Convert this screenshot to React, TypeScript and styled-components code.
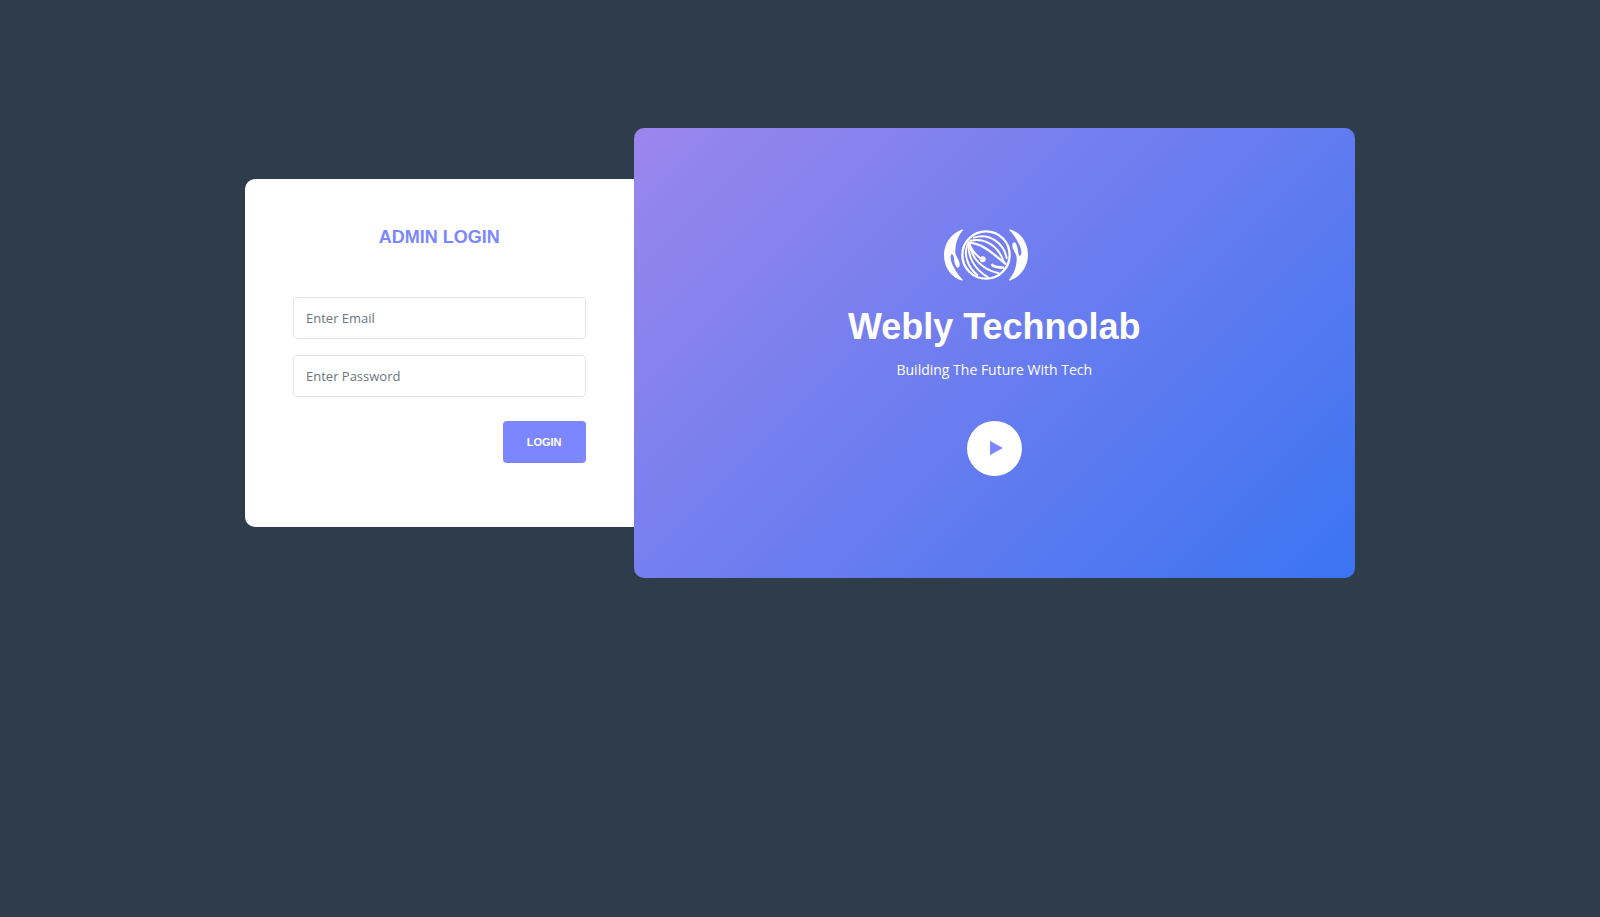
import React from "react";
import styled, { createGlobalStyle } from "styled-components";

const GlobalStyle = createGlobalStyle`
  *, *::before, *::after { box-sizing: border-box; }
  body {
    margin: 0;
    background: #2f3c4b;
    font-family: "Open Sans", sans-serif;
    font-size: 14px;
  }
`;

const Page = styled.main`
  padding: 128px 16px 64px;
`;

const Container = styled.div`
  display: grid;
  grid-template-columns: 35fr 65fr;
  align-items: center;
  width: 100%;
  max-width: 1110px;
  margin: 0 auto;
`;

const LoginCard = styled.form`
  display: flex;
  flex-direction: column;
  padding: 48px 48px 64px;
  background: #fff;
  border-radius: 10px 0 0 10px;
`;

const LoginHeading = styled.h1`
  margin: 0 0 50px;
  color: #7b86ff;
  font: bold 18px/20px "Liberation Sans", Arial, sans-serif;
  text-align: center;
  text-transform: uppercase;
`;

const Field = styled.input`
  width: 100%;
  height: 42px;
  margin-bottom: 16px;
  padding: 0 12px;
  border: 1px solid #e2e5e8;
  border-radius: 4px;
  background: #fff;
  color: #495057;
  font: 13px/20px "Open Sans", sans-serif;

  &::placeholder {
    color: #6c757d;
    opacity: 1;
  }
`;

const LoginButton = styled.button`
  align-self: flex-end;
  height: 42px;
  margin-top: 8px;
  padding: 0 24px;
  border: 0;
  border-radius: 4px;
  background: #7b86ff;
  color: #fff;
  font: bold 11px/16px "Liberation Sans", Arial, sans-serif;
  text-transform: uppercase;
  cursor: pointer;
`;

const BrandPanel = styled.section`
  display: flex;
  flex-direction: column;
  align-items: center;
  justify-content: center;
  min-height: 450px;
  padding-bottom: 2px;
  border-radius: 10px;
  background: linear-gradient(135deg, #9b86ed 0%, #3b74f2 100%);
  color: #fff;
  text-align: center;
`;

const BrandName = styled.h2`
  margin: 24px 0 10px;
  font: bold 36px/44px "Liberation Sans", Arial, sans-serif;
`;

const Tagline = styled.p`
  margin: 0 0 40px;
  font-size: 14px;
  line-height: 22px;
`;

const PlayButton = styled.button`
  display: flex;
  align-items: center;
  justify-content: center;
  width: 55px;
  height: 55px;
  padding: 0 0 0 4px;
  border: 0;
  border-radius: 50%;
  background: #fff;
  color: #7b86ff;
  cursor: pointer;
`;

const HAND =
  "M98 43C64 54 42 86 42 120C42 158 64 188 97 197L98 194C88 184 79 172 73 160C65 147 61 134 62 125C63 115 69 116 71 126C73 141 76 158 84 158C91 156 90 144 85 134C79 122 75 118 76 104C77 82 86 60 99 46Z";

const LogoMark = () => (
  <svg width="100" height="52" viewBox="42 42 300 156" fill="none" aria-hidden="true">
    <g fill="#fff">
      <path d={HAND} />
      <path d={HAND} transform="rotate(180 168 120)" />
      <circle cx="158" cy="133" r="9" />
    </g>
    <g stroke="#fff" strokeLinecap="round">
      <circle cx="168" cy="120" r="71" strokeWidth="7" />
      <path d="M113 88C100 116 112 156 142 180" strokeWidth="6" />
      <path d="M116 86C113 124 132 162 174 187" strokeWidth="6" />
      <path d="M119 87C123 126 155 164 205 174" strokeWidth="6" />
      <path d="M116 84C126 107 141 125 158 133" strokeWidth="6" />
      <path d="M116 82C164 87 191 119 226 146" strokeWidth="7" />
      <path d="M121 77C169 67 208 97 221 141" strokeWidth="6" />
      <path d="M132 68C178 52 222 85 230 130" strokeWidth="6" />
      <path d="M187 150C194 157 204 156 219 158" strokeWidth="8" />
    </g>
  </svg>
);

export default function App() {
  return (
    <>
      <GlobalStyle />
      <Page>
        <Container>
          <LoginCard onSubmit={(event) => event.preventDefault()}>
            <LoginHeading>Admin Login</LoginHeading>
            <Field type="email" name="email" placeholder="Enter Email" aria-label="Email" />
            <Field type="password" name="password" placeholder="Enter Password" aria-label="Password" />
            <LoginButton type="submit">Login</LoginButton>
          </LoginCard>
          <BrandPanel>
            <LogoMark />
            <BrandName>Webly Technolab</BrandName>
            <Tagline>Building The Future With Tech</Tagline>
            <PlayButton type="button" aria-label="Play video">
              <svg width="13" height="14" viewBox="0 0 13 14" aria-hidden="true">
                <path d="M0 0L13 7L0 14Z" fill="currentColor" />
              </svg>
            </PlayButton>
          </BrandPanel>
        </Container>
      </Page>
    </>
  );
}
